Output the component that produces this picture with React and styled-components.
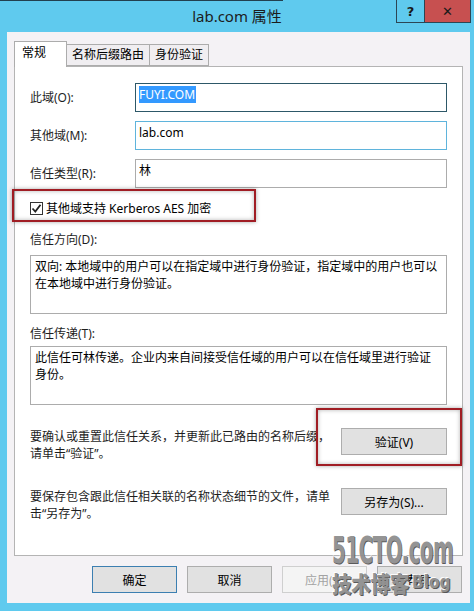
import styled, { createGlobalStyle } from 'styled-components'

const GlobalStyle = createGlobalStyle`
  html, body {
    margin: 0;
    padding: 0;
    background: #5fcaee;
  }
  body {
    font-family: "Noto Sans", "Noto Sans CJK SC", sans-serif;
    font-size: 12px;
    color: #000;
  }
`

const Window = styled.div`
  position: relative;
  width: 474px;
  height: 611px;
  background: #5fcaee;
  display: flex;
  flex-direction: column;
  box-sizing: border-box;
  overflow: hidden;
`
const TopEdge = styled.div`
  position: absolute;
  left: 0;
  top: 0;
  width: 283px;
  height: 1px;
  background: #22404f;
`
const TitleBar = styled.div`
  height: 32px;
  display: grid;
  grid-template-columns: 1fr auto 1fr;
  align-items: start;
`
const Title = styled.div`
  grid-column: 2;
  padding-top: 6px;
  font-size: 15px;
  line-height: 20px;
  color: #1c1c1c;
`
const Caption = styled.div`
  grid-column: 3;
  justify-self: end;
  display: flex;
  margin-right: 3px;
  border: 1px solid #2c4654;
  border-top: none;
`
const CaptionButton = styled.div`
  width: ${(p) => p.w}px;
  height: 22px;
  display: flex;
  align-items: center;
  justify-content: center;
  background: ${(p) => (p.close ? '#c75050' : 'transparent')};
  border-left: ${(p) => (p.close ? '1px solid #2c4654' : 'none')};
  font-family: "DejaVu Sans", sans-serif;
  font-weight: bold;
  font-size: 13px;
  color: #1a1a1a;
`
const Client = styled.div`
  flex: 1;
  margin: 0 4px 8px 7px;
  background: #f4f2f5;
  padding: 9px 7px 10px 7px;
  display: flex;
  flex-direction: column;
`
const TabRow = styled.div`
  display: flex;
  align-items: flex-end;
  height: 25px;
  position: relative;
  z-index: 1;
`
const Tab = styled.div`
  height: ${(p) => (p.active ? 26 : 22)}px;
  margin-bottom: ${(p) => (p.active ? -1 : 0)}px;
  padding: ${(p) => (p.active ? '0 20px 0 7px' : '0 5px')};
  box-sizing: border-box;
  border: 1px solid #acacac;
  border-bottom: ${(p) => (p.active ? 'none' : '1px solid #acacac')};
  border-left: ${(p) => (p.first ? '1px solid #acacac' : 'none')};
  background: ${(p) => (p.active ? '#fff' : '#f0eef1')};
  line-height: ${(p) => (p.active ? 22 : 20)}px;
  color: #000;
`
const Panel = styled.div`
  flex: 1;
  background: #fff;
  border: 1px solid #b4b4b4;
  padding: 0 15px;
  display: flex;
  flex-direction: column;
`
const FieldGrid = styled.div`
  margin-top: 16px;
  display: grid;
  grid-template-columns: 105px 1fr;
  grid-auto-rows: 29px;
  row-gap: 9px;
  align-items: center;
`
const Label = styled.div`
  color: #1e1e1e;
  line-height: 17px;
  margin-top: ${(p) => p.mt || 0}px;
`
const TextField = styled.div`
  height: 29px;
  box-sizing: border-box;
  border: 1px solid ${(p) => p.border};
  padding: 2px 3px;
  line-height: 17px;
  background: #fff;
`
const Selected = styled.span`
  background: #3399ff;
  color: #fff;
  padding-right: 1px;
`
const CheckRow = styled.div`
  margin-top: 10px;
  height: 20px;
  display: flex;
  align-items: center;
  gap: 3px;
`
const CheckBox = styled.div`
  width: 13px;
  height: 13px;
  box-sizing: border-box;
  border: 1px solid #333;
  background: #fff;
  display: flex;
  align-items: center;
  justify-content: center;
`
const TextArea = styled.div`
  margin-top: ${(p) => p.mt}px;
  height: 59px;
  box-sizing: border-box;
  border: 1px solid #acacac;
  padding: 2px 4px;
  line-height: 17px;
  color: #000;
`
const ActionRow = styled.div`
  margin-top: ${(p) => p.mt}px;
  display: flex;
  justify-content: space-between;
  align-items: flex-start;
`
const ActionText = styled.div`
  width: 304px;
  line-height: 17px;
  color: #1e1e1e;
`
const Button = styled.div`
  width: ${(p) => p.w}px;
  height: 27px;
  box-sizing: border-box;
  border: 1px solid ${(p) => (p.primary ? '#3c7fb1' : p.disabled ? '#cfcfcf' : '#adadad')};
  background: ${(p) => (p.disabled ? '#f4f4f4' : '#e1e1e1')};
  color: ${(p) => (p.disabled ? '#a3a3a3' : '#000')};
  display: flex;
  align-items: center;
  justify-content: center;
`
const Footer = styled.div`
  margin-top: 10px;
  display: flex;
  justify-content: flex-end;
  gap: 10px;
  padding-right: 1px;
`
const Highlight = styled.div`
  position: absolute;
  left: ${(p) => p.x}px;
  top: ${(p) => p.y}px;
  width: ${(p) => p.w}px;
  height: ${(p) => p.h}px;
  box-sizing: border-box;
  border: 2px solid #a01d24;
  box-shadow: 0 0 4px rgba(0, 0, 0, 0.35), inset 0 0 4px rgba(0, 0, 0, 0.3);
  pointer-events: none;
`
const Watermark = styled.div`
  position: absolute;
  left: 332px;
  top: 532px;
  width: 124px;
  display: flex;
  flex-direction: column;
  color: #8c8c8c;
  font-family: "DejaVu Sans Condensed", "Noto Sans CJK SC", sans-serif;
  font-weight: bold;
  text-shadow: 1px 1px 0 #4e4e4e, -1px -1px 0 #fff;
  opacity: 0.92;
  pointer-events: none;
  white-space: nowrap;
`
const MarkBig = styled.div`
  font-size: 37px;
  line-height: 38px;
  letter-spacing: -1px;
  transform: scaleX(0.6);
  transform-origin: left top;
`
const MarkSmall = styled.div`
  display: flex;
  align-items: center;
  gap: 3px;
  margin-top: -1px;
`
const MarkCjk = styled.span`
  display: inline-block;
  font-family: "Noto Sans CJK SC", sans-serif;
  font-size: 22px;
  line-height: 26px;
  font-weight: 900;
  width: 78px;
  transform: scaleX(0.88);
  transform-origin: left center;
`
const MarkBlog = styled.span`
  font-size: 17px;
  margin-left: -1px;
`

function Check() {
  return (
    <svg width="11" height="11" viewBox="0 0 11 11">
      <path d="M1.5 5.5 L4.3 8.5 L9.5 1.8" fill="none" stroke="#222" strokeWidth="1.8" />
    </svg>
  )
}

export default function App() {
  return (
    <>
      <GlobalStyle />
      <Window>
        <TopEdge />
        <TitleBar>
          <Title>lab.com 属性</Title>
          <Caption>
            <CaptionButton w={27}>?</CaptionButton>
            <CaptionButton w={45} close>
              ✕
            </CaptionButton>
          </Caption>
        </TitleBar>
        <Client>
          <TabRow>
            <Tab active first>
              常规
            </Tab>
            <Tab>名称后缀路由</Tab>
            <Tab>身份验证</Tab>
          </TabRow>
          <Panel>
            <FieldGrid>
              <Label>此域(O):</Label>
              <TextField border="#2d5868">
                <Selected>FUYI.COM</Selected>
              </TextField>
              <Label>其他域(M):</Label>
              <TextField border="#5fb4dc">lab.com</TextField>
              <Label>信任类型(R):</Label>
              <TextField border="#acacac">林</TextField>
            </FieldGrid>
            <CheckRow>
              <CheckBox>
                <Check />
              </CheckBox>
              <span>其他域支持 Kerberos AES 加密</span>
            </CheckRow>
            <Label mt={13}>信任方向(D):</Label>
            <TextArea mt={7}>
              双向: 本地域中的用户可以在指定域中进行身份验证，指定域中的用户也可以在本地域中进行身份验证。
            </TextArea>
            <Label mt={11}>信任传递(T):</Label>
            <TextArea mt={4}>
              此信任可林传递。企业内来自间接受信任域的用户可以在信任域里进行验证身份。
            </TextArea>
            <ActionRow mt={23}>
              <ActionText>要确认或重置此信任关系，并更新此已路由的名称后缀，请单击“验证”。</ActionText>
              <Button w={106}>验证(V)</Button>
            </ActionRow>
            <ActionRow mt={26}>
              <ActionText>要保存包含跟此信任相关联的名称状态细节的文件，请单击“另存为”。</ActionText>
              <Button w={106}>另存为(S)...</Button>
            </ActionRow>
          </Panel>
          <Footer>
            <Button w={85} primary>
              确定
            </Button>
            <Button w={85}>取消</Button>
            <Button w={85} disabled>
              应用(A)
            </Button>
            <Button w={85}>帮助</Button>
          </Footer>
        </Client>
        <Highlight x={12} y={189} w={244} h={33} />
        <Highlight x={316} y={408} w={146} h={58} />
        <Watermark>
          <MarkBig>51CTO.com</MarkBig>
          <MarkSmall>
            <MarkCjk>技术博客</MarkCjk>
            <MarkBlog>Blog</MarkBlog>
          </MarkSmall>
        </Watermark>
      </Window>
    </>
  )
}
